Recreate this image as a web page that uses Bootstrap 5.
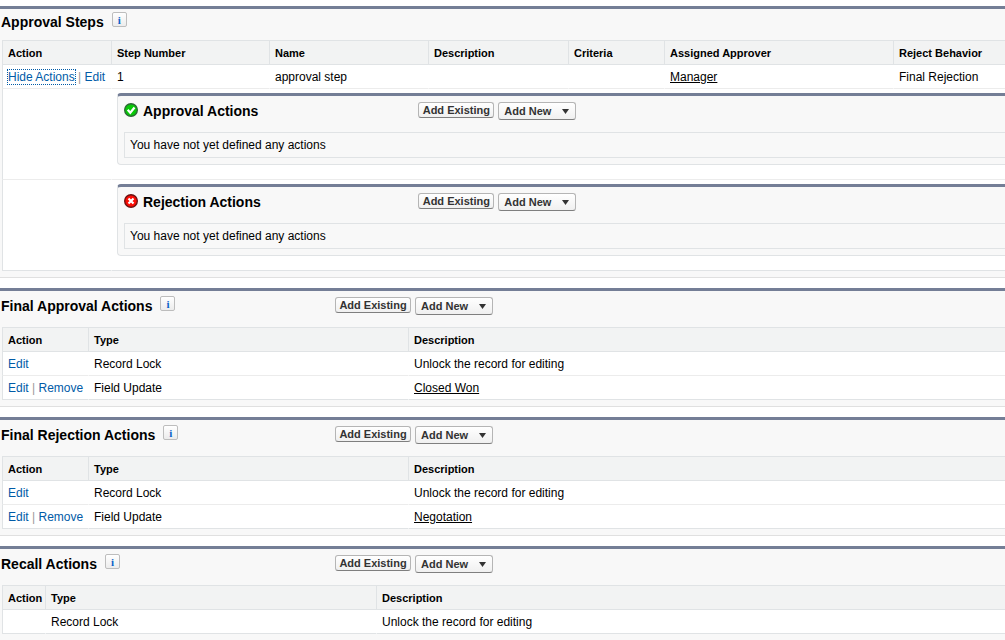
<!DOCTYPE html>
<html lang="en">
<head>
<meta charset="utf-8">
<meta name="viewport" content="width=device-width, initial-scale=1">
<title>Approval Process</title>
<link href="https://cdn.jsdelivr.net/npm/bootstrap@5.3.0/dist/css/bootstrap.min.css" rel="stylesheet">
<style>
body { font-family: "Liberation Sans", Arial, sans-serif; font-size: 12px; line-height: 16px; color: #000; background: #fff; padding-top: 6px; overflow-x: hidden; }
a { color: #015ba7; text-decoration: none; }
a:hover { text-decoration: underline; }
a.ref { color: #000; text-decoration: underline; }
.section { background: #f8f8f8; border-top: 3px solid #747e96; border-bottom: 1px solid #e0e0e0; padding-bottom: 6px; margin-bottom: 10px; }
.section:last-child { border-bottom: 0; margin-bottom: 0; }
.section-head { padding: 5px 0 11px; }
.section-head.tight { padding: 3px 0 8px; }
h2, h3 { font-size: 14px; line-height: 20px; font-weight: bold; margin: 0; white-space: nowrap; }
h2 { padding-left: 1px; }
.info { width: 15px; height: 15px; margin-left: 8px; padding: 0; border: 1px solid #bdbdbd; border-radius: 2px; background: linear-gradient(#fff, #ececec); color: #0a62c9; font: bold 11px/12px "Liberation Serif", serif; text-align: center; }
.actions { padding-top: 1px; gap: 4px; }
.tool { font-size: 11px; font-weight: bold; line-height: 14px; color: #333; white-space: nowrap; padding: 0; border: 1px solid #b5b5b5; border-bottom-color: #7f7f7f; border-radius: 3px; background: linear-gradient(#fff, #f0f0f0); }
.tool-existing { width: 76px; height: 16px; }
.tool-new { width: 78px; height: 18px; padding: 0 6px 0 5px; }
.grid { width: 100%; table-layout: fixed; border-collapse: separate; border-spacing: 0; margin-left: 2px; background: #fff; border-top: 1px solid #e0e3e5; }
.grid-wrap { overflow: hidden; }
.grid th, .grid td { height: 24px; padding: 0 0 0 5px; border-left: 1px solid transparent; border-bottom: 1px solid #ececec; white-space: nowrap; vertical-align: middle; }
.grid th { font-size: 11px; background: #f2f3f3; border-color: #e0e3e5; }
.grid tr > :first-child { border-left-color: #e0e3e5; }
.grid tr:last-child td { border-bottom-color: #e0e3e5; }
.grid tr > td.links { padding-top: 1px; }
.sep { color: #999; }
.current { outline: 1px dotted #015ba7; }
.grid td.nest { padding: 4px 0 14px 5px; }
.panel { background: #f8f8f8; border: 1px solid #e0e3e5; border-top: 3px solid #747e96; border-right: 0; border-radius: 4px 0 0 4px; padding: 0 0 6px 6px; }
.empty { border: 1px solid #e0e3e5; border-right: 0; padding: 4px 0 4px 5px; }
.state { width: 14px; height: 14px; margin: 2px 5px 0 0; }
.w43 { width: 43px; } .w86 { width: 86px; } .w96 { width: 96px; } .w109 { width: 109px; } .w140 { width: 140px; }
.w158 { width: 158px; } .w159 { width: 159px; } .w229 { width: 229px; } .w320 { width: 320px; } .w331 { width: 331px; }
</style>
</head>
<body>
<svg class="d-none" aria-hidden="true">
  <symbol id="caret" viewBox="0 0 7 5"><path d="M0 0h7L3.500 5z" fill="#333"/></symbol>
  <symbol id="ok" viewBox="0 0 14 14"><circle cx="7" cy="7" r="6.300" fill="#08c808" stroke="#2b6a35" stroke-width="1.400"/><path d="M3.700 6.700l2.600 3 4.200-5.200" fill="none" stroke="#fff" stroke-width="2.200"/></symbol>
  <symbol id="no" viewBox="0 0 14 14"><circle cx="7" cy="7" r="6.300" fill="#fb0d05" stroke="#6d1212" stroke-width="1.400"/><path d="M4.500 4.500l5 5m0-5l-5 5" fill="none" stroke="#fff" stroke-width="2.200"/></symbol>
</svg>
<main>
  <section class="section">
    <div class="section-head tight d-flex align-items-start">
      <h2>Approval Steps</h2><button type="button" class="info" aria-label="Help">i</button>
    </div>
    <div class="grid-wrap">
    <table class="grid">
      <colgroup><col class="w109"><col class="w158"><col class="w159"><col class="w140"><col class="w96"><col class="w229"><col></colgroup>
      <thead><tr><th scope="col">Action</th><th scope="col">Step Number</th><th scope="col">Name</th><th scope="col">Description</th><th scope="col">Criteria</th><th scope="col">Assigned Approver</th><th scope="col">Reject Behavior</th></tr></thead>
      <tbody>
        <tr><td class="links"><a class="current" href="#">Hide Actions</a> <span class="sep">|</span> <a href="#">Edit</a></td><td>1</td><td>approval step</td><td></td><td></td><td><a class="ref" href="#">Manager</a></td><td>Final Rejection</td></tr>
        <tr><td></td><td colspan="6" class="nest">
          <div class="panel">
            <div class="section-head d-flex align-items-start">
              <div class="col-4 d-flex align-items-start"><svg class="state flex-shrink-0"><use href="#ok"/></svg><h3>Approval Actions</h3></div>
              <div class="actions d-flex align-items-start"><button type="button" class="tool tool-existing">Add Existing</button><button type="button" class="tool tool-new d-flex align-items-center justify-content-between" aria-haspopup="menu">Add New <svg width="7" height="5"><use href="#caret"/></svg></button></div>
            </div>
            <div class="empty">You have not yet defined any actions</div>
          </div>
        </td></tr>
        <tr><td></td><td colspan="6" class="nest">
          <div class="panel">
            <div class="section-head d-flex align-items-start">
              <div class="col-4 d-flex align-items-start"><svg class="state flex-shrink-0"><use href="#no"/></svg><h3>Rejection Actions</h3></div>
              <div class="actions d-flex align-items-start"><button type="button" class="tool tool-existing">Add Existing</button><button type="button" class="tool tool-new d-flex align-items-center justify-content-between" aria-haspopup="menu">Add New <svg width="7" height="5"><use href="#caret"/></svg></button></div>
            </div>
            <div class="empty">You have not yet defined any actions</div>
          </div>
        </td></tr>
      </tbody>
    </table>
    </div>
  </section>

  <section class="section">
    <div class="section-head d-flex align-items-start">
      <div class="col-4 d-flex align-items-start"><h2>Final Approval Actions</h2><button type="button" class="info" aria-label="Help">i</button></div>
      <div class="actions d-flex align-items-start"><button type="button" class="tool tool-existing">Add Existing</button><button type="button" class="tool tool-new d-flex align-items-center justify-content-between" aria-haspopup="menu">Add New <svg width="7" height="5"><use href="#caret"/></svg></button></div>
    </div>
    <div class="grid-wrap">
    <table class="grid">
      <colgroup><col class="w86"><col class="w320"><col></colgroup>
      <thead><tr><th scope="col">Action</th><th scope="col">Type</th><th scope="col">Description</th></tr></thead>
      <tbody>
        <tr><td class="links"><a href="#">Edit</a></td><td>Record Lock</td><td>Unlock the record for editing</td></tr>
        <tr><td class="links"><a href="#">Edit</a> <span class="sep">|</span> <a href="#">Remove</a></td><td>Field Update</td><td><a class="ref" href="#">Closed Won</a></td></tr>
      </tbody>
    </table>
    </div>
  </section>

  <section class="section">
    <div class="section-head d-flex align-items-start">
      <div class="col-4 d-flex align-items-start"><h2>Final Rejection Actions</h2><button type="button" class="info" aria-label="Help">i</button></div>
      <div class="actions d-flex align-items-start"><button type="button" class="tool tool-existing">Add Existing</button><button type="button" class="tool tool-new d-flex align-items-center justify-content-between" aria-haspopup="menu">Add New <svg width="7" height="5"><use href="#caret"/></svg></button></div>
    </div>
    <div class="grid-wrap">
    <table class="grid">
      <colgroup><col class="w86"><col class="w320"><col></colgroup>
      <thead><tr><th scope="col">Action</th><th scope="col">Type</th><th scope="col">Description</th></tr></thead>
      <tbody>
        <tr><td class="links"><a href="#">Edit</a></td><td>Record Lock</td><td>Unlock the record for editing</td></tr>
        <tr><td class="links"><a href="#">Edit</a> <span class="sep">|</span> <a href="#">Remove</a></td><td>Field Update</td><td><a class="ref" href="#">Negotation</a></td></tr>
      </tbody>
    </table>
    </div>
  </section>

  <section class="section">
    <div class="section-head d-flex align-items-start">
      <div class="col-4 d-flex align-items-start"><h2>Recall Actions</h2><button type="button" class="info" aria-label="Help">i</button></div>
      <div class="actions d-flex align-items-start"><button type="button" class="tool tool-existing">Add Existing</button><button type="button" class="tool tool-new d-flex align-items-center justify-content-between" aria-haspopup="menu">Add New <svg width="7" height="5"><use href="#caret"/></svg></button></div>
    </div>
    <div class="grid-wrap">
    <table class="grid">
      <colgroup><col class="w43"><col class="w331"><col></colgroup>
      <thead><tr><th scope="col">Action</th><th scope="col">Type</th><th scope="col">Description</th></tr></thead>
      <tbody>
        <tr><td></td><td>Record Lock</td><td>Unlock the record for editing</td></tr>
      </tbody>
    </table>
    </div>
  </section>
</main>
<script src="https://cdn.jsdelivr.net/npm/bootstrap@5.3.0/dist/js/bootstrap.bundle.min.js"></script>
</body>
</html>
